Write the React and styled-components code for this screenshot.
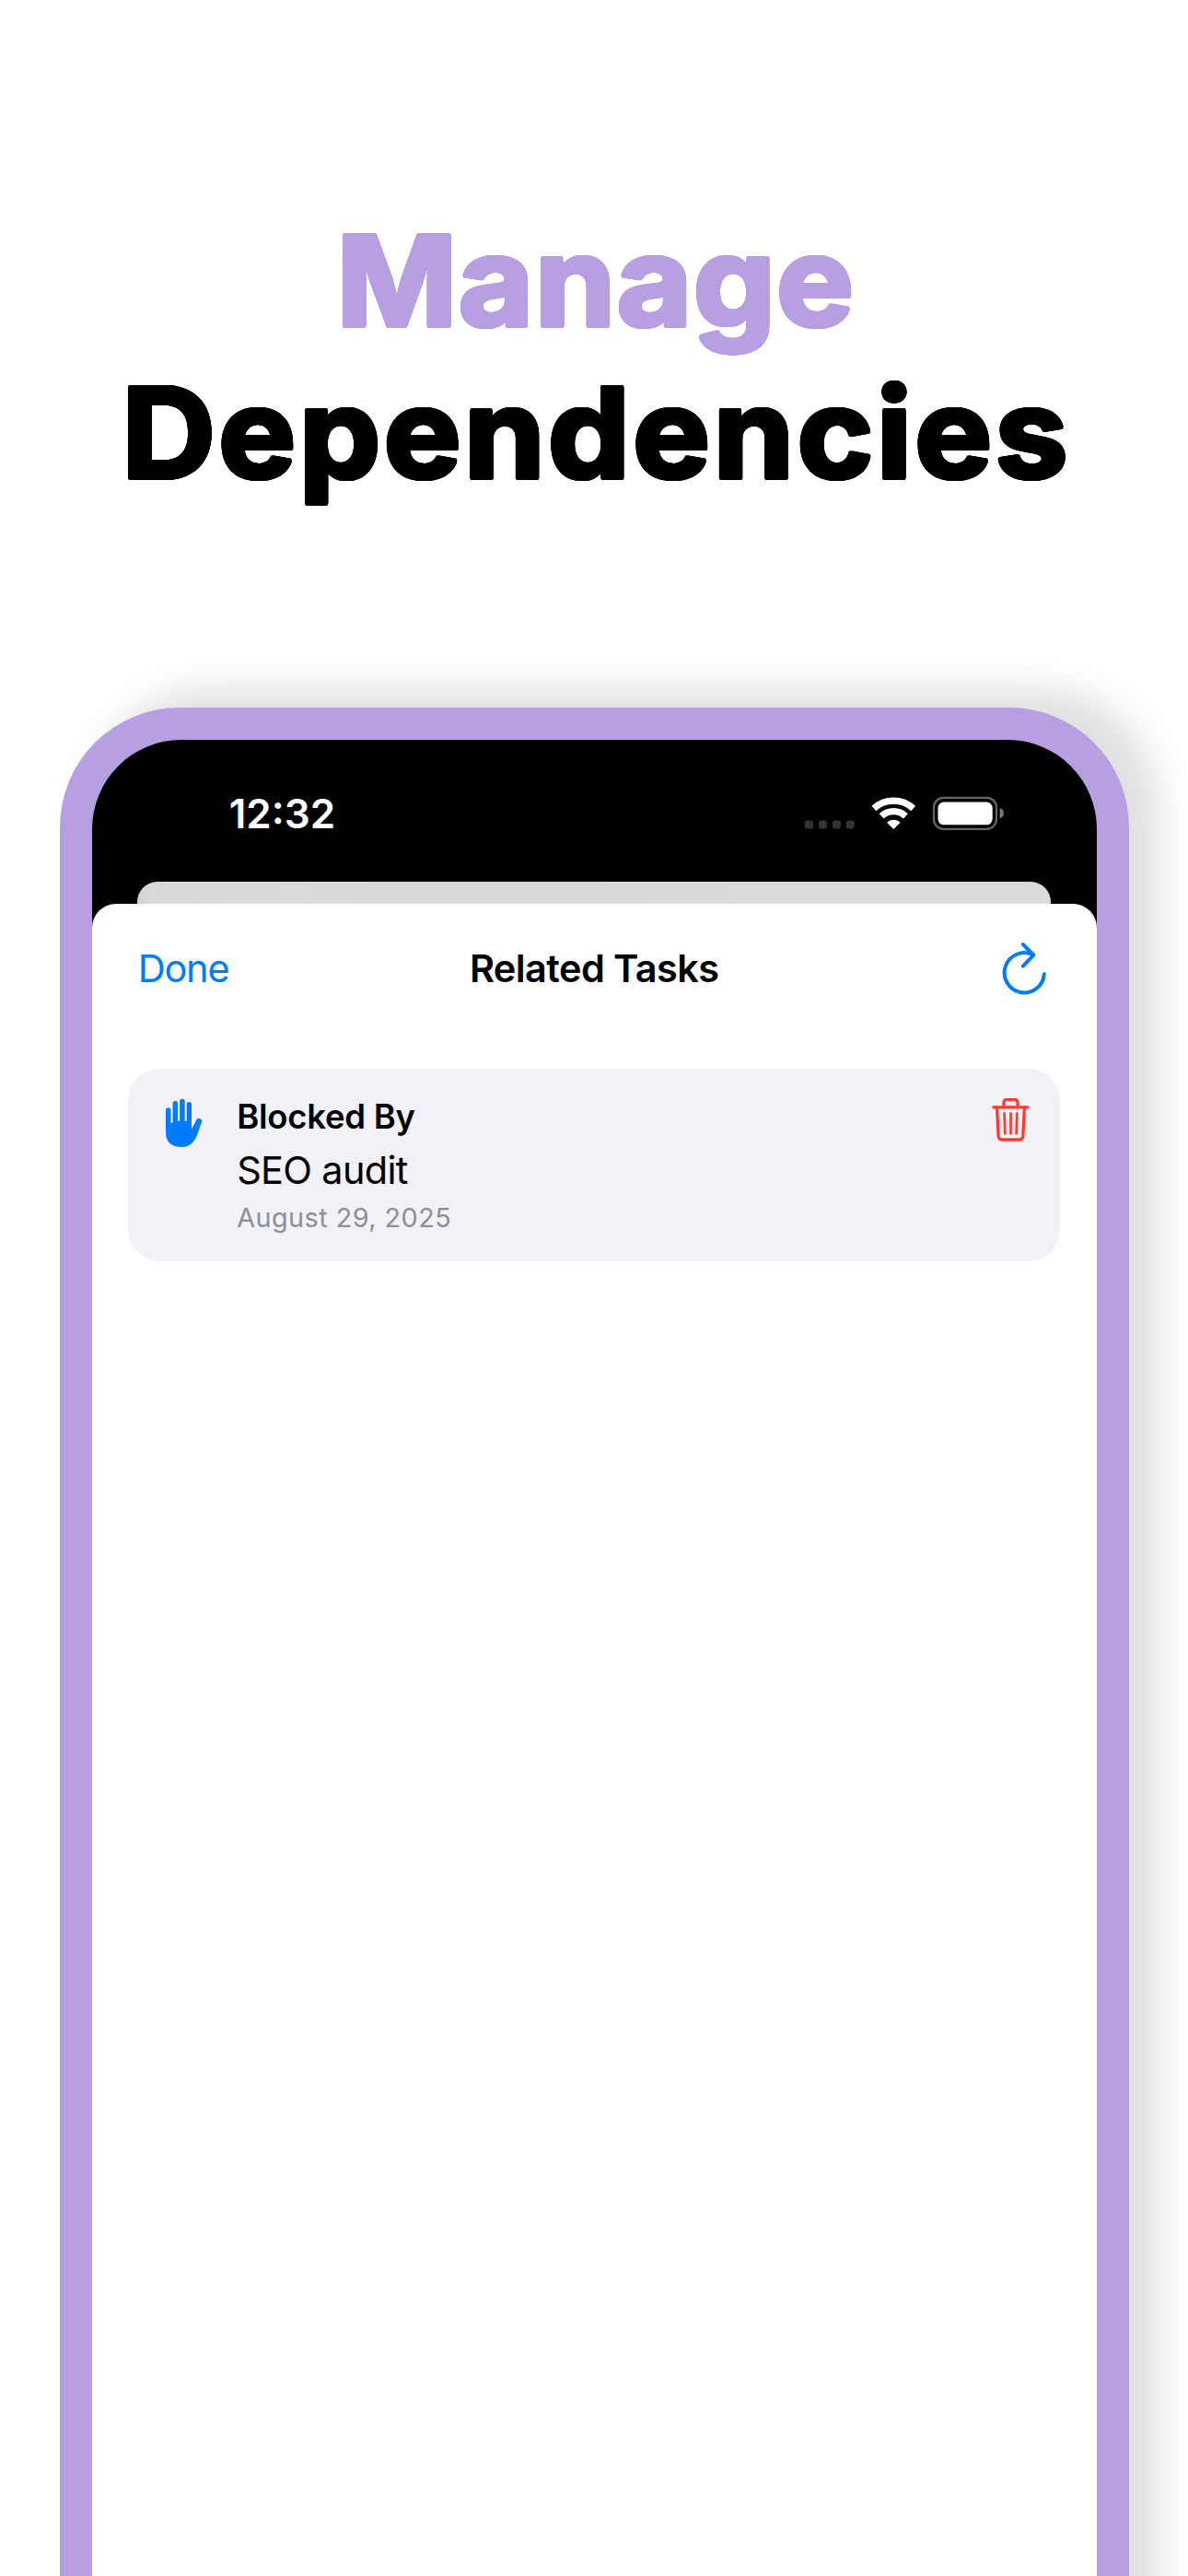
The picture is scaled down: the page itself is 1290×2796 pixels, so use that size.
import React from 'react';
import styled, { createGlobalStyle } from 'styled-components';

const Global = createGlobalStyle`
  * { box-sizing: border-box; }
  html, body { margin: 0; padding: 0; background: #fff; }
  body { font-family: Inter, Roboto, "Liberation Sans", sans-serif; }
`;

const Page = styled.main`
  width: 1290px;
  height: 2796px;
  overflow: hidden;
  background: #fff;
`;

const Headline = styled.h1`
  height: 767.5px;
  margin: 0;
  padding-top: 223px;
  display: flex;
  flex-direction: column;
  align-items: center;
  font-size: 135.5px;
  font-weight: 650;
  line-height: 165px;
`;

// A ring of solid shadows thickens the letters and rounds their corners.
const roundedOutline = (color, radius = 2.3, steps = 24) =>
  Array.from({ length: steps }, (_, i) => {
    const angle = (i / steps) * Math.PI * 2;
    const x = (Math.cos(angle) * radius).toFixed(2);
    const y = (Math.sin(angle) * radius).toFixed(2);
    return `${x}px ${y}px 0 ${color}`;
  }).join(', ');

const HeadlineLine = styled.span`
  display: block;
  height: 165px;
  white-space: nowrap;
  color: ${({ $color }) => $color};
  letter-spacing: ${({ $spacing }) => $spacing}px;
  margin-left: ${({ $shift = 0 }) => $shift}px;
  text-shadow: ${({ $color }) => roundedOutline($color)};
  transform: scaleX(1.04);
`;

const Phone = styled.section`
  width: 1161px;
  height: 2200px;
  margin-left: 64.7px;
  padding: 35px 35px 0;
  border-radius: 130px 130px 0 0;
  background: #b79fe2;
  box-shadow: 33px -22px 38px rgba(0, 0, 0, 0.122);
`;

const Screen = styled.div`
  height: 100%;
  border-radius: 97px 97px 0 0;
  overflow: hidden;
  background: #000;
`;

const StatusBar = styled.header`
  height: 154px;
  padding: 0 101px 0 149px;
  display: flex;
  align-items: flex-start;
  justify-content: space-between;
`;

const Clock = styled.time`
  margin-top: 53.5px;
  color: #fff;
  font-size: 44px;
  font-weight: 600;
  line-height: 54px;
`;

const StatusIcons = styled.svg`
  display: block;
  width: 220px;
  height: 40px;
  margin-top: 60px;
`;

const BackCard = styled.div`
  height: 24.5px;
  margin: 0 49.5px;
  border-radius: 22px 22px 0 0;
  background: linear-gradient(90deg, #cfd0d0 0, #d9dadc 16px, #d9dbda 50%, #dadbdd 100%);
`;

const SheetBackdrop = styled.div`
  height: 1900px;
  background: #000;
`;

const Sheet = styled.div`
  height: 100%;
  border-radius: 26px 26px 0 0;
  background: #fff;
`;

const NavBar = styled.nav`
  height: 178.5px;
  padding: 40px 50px 0 50px;
  display: grid;
  grid-template-columns: 200px 1fr 200px;
  align-items: start;
`;

const DoneButton = styled.button`
  padding: 0;
  border: 0;
  background: none;
  color: #007aff;
  font: 400 41.5px/60px Inter, sans-serif;
  letter-spacing: -1.2px;
  text-align: left;
`;

const NavTitle = styled.h2`
  margin: 0;
  text-align: center;
  font-size: 41.5px;
  font-weight: 600;
  line-height: 60px;
  white-space: nowrap;
  letter-spacing: -0.6px;
`;

const IconButton = styled.button`
  justify-self: end;
  padding: 0;
  border: 0;
  background: none;
  line-height: 0;
  color: ${({ $color }) => $color};
`;

const TaskCard = styled.article`
  width: 1011.5px;
  height: 209.5px;
  margin-left: 39.5px;
  padding: 26px 27px 0 35px;
  border-radius: 34px;
  display: grid;
  grid-template-columns: 83px 1fr 54px;
  align-items: start;
  background: #f2f1f7;
`;

const TaskText = styled.div`
  display: flex;
  flex-direction: column;
  white-space: nowrap;
`;

const TaskLine = styled.span`
  height: ${({ $height }) => $height}px;
  line-height: ${({ $height }) => $height}px;
  font-size: ${({ $size }) => $size}px;
  font-weight: ${({ $weight = 400 }) => $weight};
  color: ${({ $color = '#000' }) => $color};
  letter-spacing: ${({ $spacing = 0 }) => $spacing}px;
`;

function StatusGlyphs() {
  return (
    <StatusIcons viewBox="870 862.5 220 40">
      {[874, 889, 904, 918.7].map((x) => (
        <rect key={x} x={x} y="890" width="9" height="9" rx="2.8" fill="#333" />
      ))}
      <g fill="none" stroke="#fff" strokeWidth="7.2">
        <path d="M948.9 877A31.4 31.4 0 0 1 991.7 877" />
        <path d="M957.2 885.4A19 19 0 0 1 983.4 885.4" />
      </g>
      <path d="M963 892.3A10.5 10.5 0 0 1 977.6 892.3L970.3 899.6Z" fill="#fff" />
      <rect x="1014" y="865.3" width="68" height="34" rx="10.5" fill="none" stroke="#666" strokeWidth="2.2" />
      <rect x="1018.5" y="870" width="59.2" height="24.8" rx="6.5" fill="#fff" />
      <path d="M1085.7 876.6Q1090 878.3 1090 882.3T1085.7 888Z" fill="#777" />
    </StatusIcons>
  );
}

function RefreshIcon() {
  return (
    <svg width="54" height="64" viewBox="1087 1020 54 64" fill="none" stroke="currentColor" strokeWidth="4" strokeLinecap="round" strokeLinejoin="round">
      <path d="M1122 1035.5A21.6 21.6 0 1 0 1133.8 1056.3" />
      <path d="M1110.8 1024L1122.4 1035.7L1110.8 1047.6" />
    </svg>
  );
}

function HandIcon() {
  return (
    <svg width="52" height="64" viewBox="174 1186 52 64" fill="#007aff">
      <path d="M180 1205a2.7 2.7 0 0 1 5.4 0v14.2l2.2-.9v-20.7a2.7 2.7 0 0 1 5.4 0v19.1h2.2v-21.2a2.7 2.7 0 0 1 5.4 0v21.2h2.2v-18a2.6 2.6 0 0 1 5.2 0v27l5-9.8q1.2-2.4 3.8-2 2.8.8 2.2 3.8l-4 11.5q-5.2 15.8-17.2 15.8Q180 1245 180 1229Z" />
    </svg>
  );
}

function TrashIcon() {
  return (
    <svg width="54" height="58" viewBox="1070 1186 54 58" fill="none" stroke="currentColor" strokeWidth="3.3" strokeLinecap="round" strokeLinejoin="round">
      <path d="M1078.9 1201.8H1115.8" />
      <path d="M1090 1201V1196.7Q1090 1193.6 1093 1193.6H1102Q1105 1193.6 1105 1196.7V1201" />
      <path d="M1082.5 1202L1084.1 1233Q1084.4 1237 1088 1237H1107Q1110.5 1237 1110.8 1233L1112.4 1202" />
      <path strokeWidth="2.7" d="M1090.6 1208.3L1091.3 1230.5M1097.5 1208.3V1230.5M1104.3 1208.3L1103.6 1230.5" />
    </svg>
  );
}

export default function App() {
  return (
    <Page>
      <Global />
      <Headline>
        <HeadlineLine $color="#b79fe2" $spacing={1.2} $shift={3}>Manage</HeadlineLine>
        <HeadlineLine $color="#000" $spacing={3.2} $shift={5}>Dependencies</HeadlineLine>
      </Headline>
      <Phone>
        <Screen>
          <StatusBar>
            <Clock>12:32</Clock>
            <StatusGlyphs />
          </StatusBar>
          <BackCard />
          <SheetBackdrop>
            <Sheet>
              <NavBar>
                <DoneButton>Done</DoneButton>
                <NavTitle>Related Tasks</NavTitle>
                <IconButton $color="#007aff" aria-label="Refresh"><RefreshIcon /></IconButton>
              </NavBar>
              <TaskCard>
                <HandIcon />
                <TaskText>
                  <TaskLine $height={52} $size={36.5} $weight={600} $spacing={-0.25}>Blocked By</TaskLine>
                  <TaskLine $height={64} $size={41.5} $spacing={-0.7}>SEO audit</TaskLine>
                  <TaskLine $height={40} $size={28.8} $color="#8e8e93" $spacing={0.45}>August 29, 2025</TaskLine>
                </TaskText>
                <IconButton $color="#ff3b30" aria-label="Delete"><TrashIcon /></IconButton>
              </TaskCard>
            </Sheet>
          </SheetBackdrop>
        </Screen>
      </Phone>
    </Page>
  );
}
